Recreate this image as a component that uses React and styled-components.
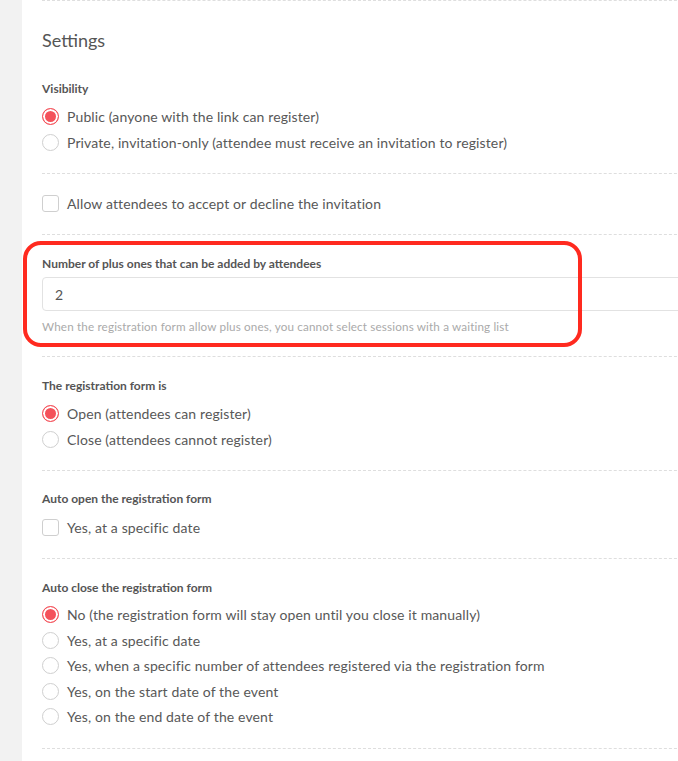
import styled, { createGlobalStyle } from 'styled-components';

const GlobalStyle = createGlobalStyle`
  html, body {
    margin: 0;
    padding: 0;
    background: #fff;
    overflow: hidden;
  }
  body {
    font-family: Lato, "Open Sans", sans-serif;
    color: #555;
  }
`;

const Page = styled.div`
  display: flex;
  min-height: 761px;
`;

const Sidebar = styled.div`
  width: 22px;
  flex-shrink: 0;
  background: #f2f2f2;
`;

const Panel = styled.div`
  flex-shrink: 0;
  width: 660px;
  padding-left: 20px;
  background: #fff;
`;

const Section = styled.div`
  position: relative;
  border-top: 1px dashed #dedede;
  padding: ${(p) => p.$top}px 0 ${(p) => p.$bottom}px;
`;

const Title = styled.h2`
  margin: 0 0 32px;
  font-size: 18px;
  line-height: 20px;
  font-weight: 400;
  color: #555;
`;

const Label = styled.div`
  font-size: 12px;
  line-height: 14px;
  font-weight: 700;
  color: #555;
  margin-bottom: ${(p) => p.$gap ?? 7}px;
`;

const Option = styled.label`
  display: flex;
  align-items: center;
  gap: 8px;
  height: ${(p) => p.$h ?? 26}px;
  font-size: 14px;
  letter-spacing: 0.12px;
  color: #585858;
`;

const Radio = styled.span`
  width: 17px;
  height: 17px;
  box-sizing: border-box;
  border-radius: 50%;
  flex-shrink: 0;
  border: 1px solid ${(p) => (p.$checked ? '#f4525b' : '#cfcfcf')};
  background: ${(p) => (p.$checked ? '#f4525b' : '#fff')};
  box-shadow: ${(p) => (p.$checked ? 'inset 0 0 0 2px #fff' : 'none')};
`;

const Checkbox = styled.span`
  width: 17px;
  height: 17px;
  box-sizing: border-box;
  flex-shrink: 0;
  border: 1px solid #cfcfcf;
  border-radius: 3px;
  background: #fff;
`;

const Input = styled.div`
  height: 34px;
  box-sizing: border-box;
  border: 1px solid #e2e2e2;
  border-radius: 4px;
  display: flex;
  align-items: center;
  padding-left: 12px;
  font-size: 14px;
  color: #555;
`;

const Help = styled.div`
  margin-top: 8px;
  font-size: 11.7px;
  letter-spacing: 0.145px;
  line-height: 14px;
  color: #aaa;
`;

const Highlight = styled.div`
  position: absolute;
  left: -19px;
  top: 6px;
  width: 559px;
  height: 106px;
  box-sizing: border-box;
  border: 4px solid #ff2a1f;
  border-radius: 18px;
  pointer-events: none;
`;

const RadioGroup = ({ options, checked, rowHeight }) =>
  options.map((text, i) => (
    <Option key={i} $h={rowHeight}>
      <Radio $checked={i === checked} />
      {text}
    </Option>
  ));

export default function App() {
  return (
    <>
      <GlobalStyle />
      <Page>
        <Sidebar />
        <Panel>
          <Section $top={29} $bottom={18}>
            <Title>Settings</Title>
            <Label>Visibility</Label>
            <RadioGroup
              checked={0}
              options={[
                'Public (anyone with the link can register)',
                'Private, invitation-only (attendee must receive an invitation to register)',
              ]}
            />
          </Section>
          <Section $top={16} $bottom={18}>
            <Option>
              <Checkbox />
              Allow attendees to accept or decline the invitation
            </Option>
          </Section>
          <Section $top={22} $bottom={23}>
            <Label $gap={6}>Number of plus ones that can be added by attendees</Label>
            <Input>2</Input>
            <Help>
              When the registration form allow plus ones, you cannot select sessions with a waiting list
            </Help>
            <Highlight />
          </Section>
          <Section $top={22} $bottom={18}>
            <Label>The registration form is</Label>
            <RadioGroup
              checked={0}
              options={['Open (attendees can register)', 'Close (attendees cannot register)']}
            />
          </Section>
          <Section $top={21} $bottom={18}>
            <Label $gap={8}>Auto open the registration form</Label>
            <Option>
              <Checkbox />
              Yes, at a specific date
            </Option>
          </Section>
          <Section $top={22} $bottom={18}>
            <Label>Auto close the registration form</Label>
            <RadioGroup
              checked={0}
              rowHeight={25.5}
              options={[
                'No (the registration form will stay open until you close it manually)',
                'Yes, at a specific date',
                'Yes, when a specific number of attendees registered via the registration form',
                'Yes, on the start date of the event',
                'Yes, on the end date of the event',
              ]}
            />
          </Section>
          <Section $top={0} $bottom={0} />
        </Panel>
      </Page>
    </>
  );
}
